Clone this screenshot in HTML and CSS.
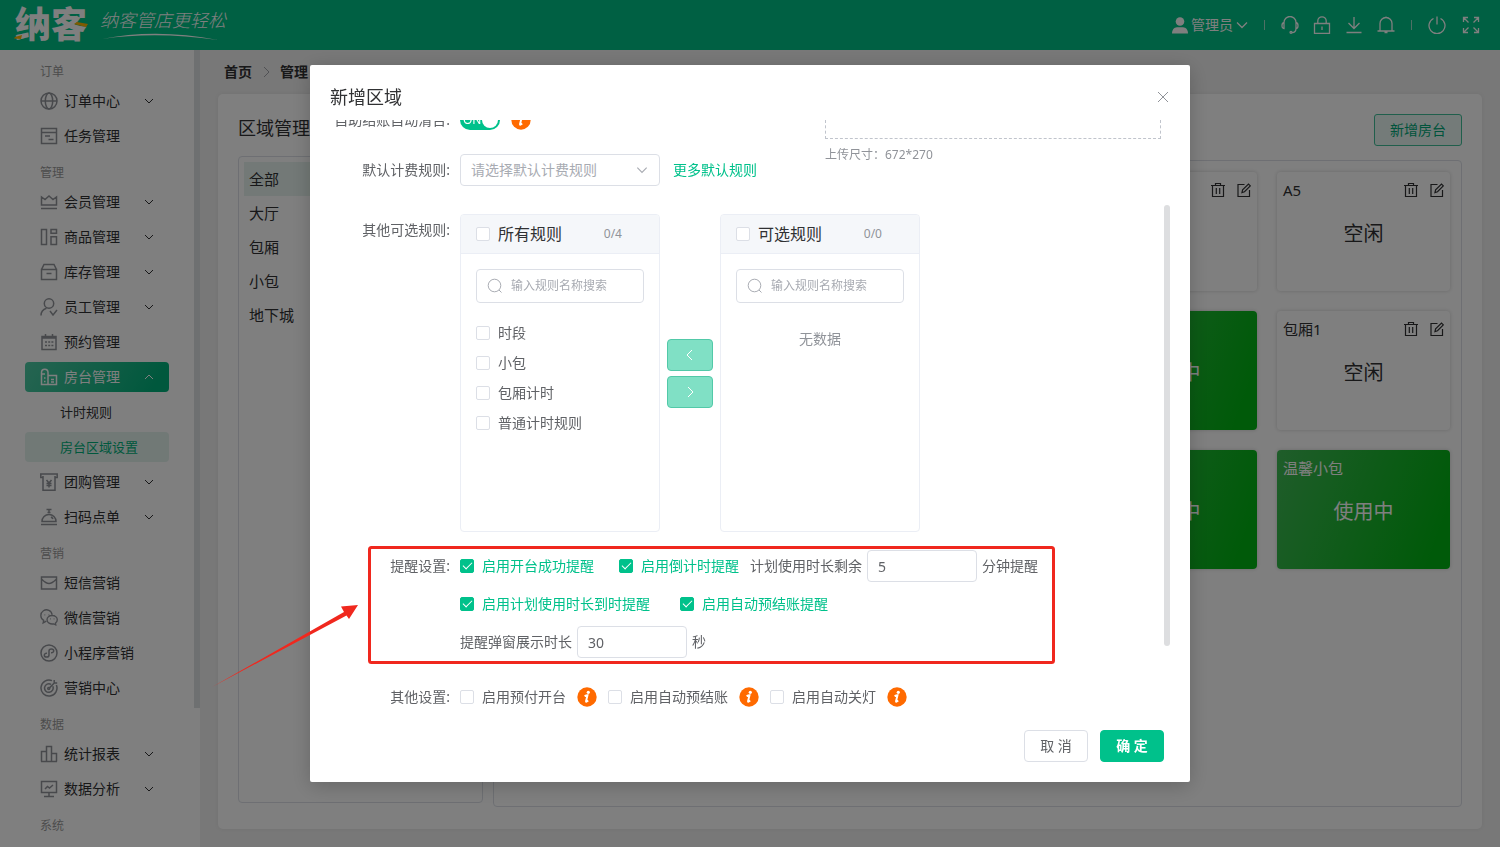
FILE: index.html
```html
<!DOCTYPE html>
<html lang="zh-CN">
<head>
<meta charset="utf-8">
<title>房台区域设置</title>
<link rel="stylesheet" href="styles.css">
</head>
<body>
<svg class="sprite" aria-hidden="true">
  <symbol id="i-down" viewBox="0 0 12 12"><path d="M2 4l4 4 4-4"/></symbol>
  <symbol id="i-up" viewBox="0 0 12 12"><path d="M2 8l4-4 4 4"/></symbol>
  <symbol id="i-right" viewBox="0 0 12 12"><path d="M4 1l5 5-5 5"/></symbol>
  <symbol id="i-left" viewBox="0 0 12 12"><path d="M8 1L3 6l5 5"/></symbol>
  <symbol id="i-search" viewBox="0 0 16 16"><circle cx="7.5" cy="7.5" r="6.3"/><path d="M12 12l2.5 2.5"/></symbol>
  <symbol id="i-info" viewBox="0 0 20 20"><circle cx="10" cy="10" r="9.7" fill="#ff6a00" stroke="none"/><circle cx="11.3" cy="5.3" r="1.6" fill="#fff" stroke="none"/><path d="M7.6 9.3c1-.7 2.2-1.1 2.9-1.1L9 14.2c-.1.9.9.5 2.2-.6" stroke="#fff" stroke-width="1.9"/></symbol>
  <symbol id="i-trash" viewBox="0 0 14 14"><path d="M0 2.5h14M1.5 2.5v11h11v-11M4.5 2.500v-2h5v2M5.300 5v6M8.700 5v6"/></symbol>
  <symbol id="i-edit" viewBox="0 0 14 14"><path d="M7.500 1.500H1v12h11.500V7M5 9.500l.6-2.600L11.500 1l1.800 1.800-5.800 5.900z"/></symbol>
  <symbol id="i-globe" viewBox="0 0 18 18"><circle cx="9" cy="9" r="8"/><ellipse cx="9" cy="9" rx="3.700" ry="8"/><path d="M1 9h16"/></symbol>
  <symbol id="i-task" viewBox="0 0 18 18"><path d="M1.500 1.500h15v15h-15zM1.500 5.500h15M5 9h5M8.500 12.500h5"/></symbol>
  <symbol id="i-crown" viewBox="0 0 18 18"><path d="M1.500 4v8h15V4l-3.500 2.500L9 3 5 6.500zM1 15.500h16"/></symbol>
  <symbol id="i-goods" viewBox="0 0 18 18"><path d="M1.500 1.500h5v15h-5zM11 1.500h5.500v3.800H11zM11 8.800h5.500v7.700H11z"/></symbol>
  <symbol id="i-stock" viewBox="0 0 18 18"><path d="M1.500 6.500h15v10h-15zM1.500 6.500L4 1.500h10l2.500 5M6.500 10.500h5"/></symbol>
  <symbol id="i-staff" viewBox="0 0 18 18"><circle cx="9" cy="5.500" r="4.700"/><path d="M1 17.500c0-4 2.500-6.300 5.500-7.300M10 13l3 4 4-5"/></symbol>
  <symbol id="i-cal" viewBox="0 0 18 18"><path d="M2 3.500h14v13H2zM2 5h14M5.500 1v3M12.500 1v3"/><path d="M5 9h2M8.200 9h2M11.400 9h2M5 12.500h2M8.200 12.500h2M11.400 12.500h2"/></symbol>
  <symbol id="i-room" viewBox="0 0 18 18"><path d="M1.500 16.500V4.500a3 3 0 0 1 6.500 0v12zM8 7.500h8.500v9H8M1.500 6H5M4 10h1.500M4 13.500h1.500M11 11.500h3M11 14h3"/></symbol>
  <symbol id="i-coupon" viewBox="0 0 18 18"><path d="M3 4.500H.8V1h16.400v3.500H15M3 3v14.300h12V3M6.500 7L9 10l2.500-3M9 10v4.500M6.500 10.500h5M6.500 12.500h5"/></symbol>
  <symbol id="i-bell-dish" viewBox="0 0 18 18"><path d="M2 13.500a7 7 0 0 1 14 0zM1 16.500h16M6.500 1.500h5M7.500 4.500h3M9 2v3M11 9c1 .5 1.600 1.200 2 2"/></symbol>
  <symbol id="i-mail" viewBox="0 0 18 18"><path d="M1.500 3h15v12h-15zM2 5.500c3 3 5 4 7 4s4-1 7-4"/></symbol>
  <symbol id="i-wechat" viewBox="0 0 20 18"><path d="M7 12.500l-3.500 2 .6-2.800A6.300 6.300 0 1 1 13.500 5.500M13.500 6.200c3.200 0 5.700 2 5.700 4.700 0 1.500-.8 2.800-2 3.700l.3 2-2.200-1.100c-4 .9-7.500-1.400-7.500-4.600 0-2.700 2.500-4.700 5.700-4.700zM5 5.500h.8M9.500 5.500h.8M11.300 10h.8M15.200 10h.8"/></symbol>
  <symbol id="i-mini" viewBox="0 0 18 18"><circle cx="9" cy="9" r="8"/><path d="M7 9.300c-1.700-.2-2.700.7-2.700 1.900 0 1.100 1 1.900 2.300 1.900C8 13.100 9 12.200 9 11V7c0-1.200 1-2.100 2.400-2.100 1.300 0 2.300.8 2.300 1.900 0 1.200-1 2.100-2.700 1.900"/></symbol>
  <symbol id="i-target" viewBox="0 0 18 18"><path d="M12 1.600A8 8 0 1 0 16.400 6M11 5.300A4.300 4.300 0 1 0 12.800 7.300M9 9.400l5.500-5.600M14.200 1v3h3"/><circle cx="8.700" cy="9.500" r="1"/></symbol>
  <symbol id="i-bars" viewBox="0 0 18 18"><path d="M1 16.500h16M1.500 16.500V6.500h5M6.500 16.500v-15h5v15M11.500 8.500h5v8"/></symbol>
  <symbol id="i-screen" viewBox="0 0 18 18"><path d="M1.500 1.500h15v11h-15zM9 12.500v4M4 16.500h10M5 9l2.500-2.500 2 1.500L13 5"/></symbol>
</svg>

<div class="app">
  <header class="topbar">
    <svg class="logo" viewBox="0 0 216 50" role="img" aria-label="纳客">
      <text class="logo-name" x="1" y="38">纳客</text>
      <path d="M60 24l12 3 2-3-11-2zM1 37l7-2-1 4-7-.5z" fill="#ffb400"/>
      <text class="logo-slogan" x="86" y="27">纳客管店更轻松</text>
      <path d="M88 39Q142 28 204 40Q142 31 88 39z" fill="#fff"/>
    </svg>
    <nav class="tools">
      <button class="user" type="button">
        <svg class="ico-fill" width="16" height="17" viewBox="0 0 16 17"><circle cx="8" cy="4.500" r="4.300"/><path d="M0 16.500c0-4 2-6 5-6.300h6c3 .3 5 2.300 5 6.300z"/></svg>
        <span>管理员</span>
        <svg class="ico" width="12" height="12" viewBox="0 0 12 12"><path d="M1 3.500l5 5 5-5"/></svg>
      </button>
      <i class="sep"></i>
      <button type="button" aria-label="客服"><svg class="ico" width="18" height="18" viewBox="0 0 18 18"><path d="M3 6.500a6 6 0 0 1 12 0M3 6.500v6C.3 12.500.3 7 3 6.500zM15 6.500v6c2.700 0 2.700-5.500 0-6zM15 12.500c0 2.500-1.500 4-4 4.200"/><circle cx="10" cy="16.300" r="1"/></svg></button>
      <button type="button" aria-label="锁屏"><svg class="ico" width="18" height="18" viewBox="0 0 18 18"><path d="M1.500 7.500h15v10h-15zM4.800 7.500V5a4.200 4.200 0 0 1 8.400 0v2.500M9 10.500v3.500"/></svg></button>
      <button type="button" aria-label="下载"><svg class="ico" width="18" height="18" viewBox="0 0 18 18"><path d="M9 1v11M3.500 7L9 12.500 14.500 7M1.500 16.500h15"/></svg></button>
      <button type="button" aria-label="通知"><svg class="ico" width="18" height="18" viewBox="0 0 18 18"><path d="M.5 15h17M3 15V7.500a6 6 0 0 1 12 0V15M9 .5v1M7.500 16.500h3"/></svg></button>
      <i class="sep"></i>
      <button type="button" aria-label="退出"><svg class="ico" width="18" height="18" viewBox="0 0 18 18"><path d="M5.500 2.500a8 8 0 1 0 7 0M9 .5v8"/></svg></button>
      <button type="button" aria-label="全屏"><svg class="ico" width="18" height="18" viewBox="0 0 18 18"><path d="M1.500 6V1.500H6M1.500 1.500l5 5M12 1.500h4.500V6M16.500 1.500l-5 5M1.500 12v4.500H6M1.500 16.500l5-5M16.500 12v4.500H12M16.500 16.500l-5-5"/></svg></button>
    </nav>
  </header>

  <div class="body">
    <aside class="sidebar">
      <nav class="menu">
        <h4>订单</h4>
        <a href="#"><svg><use href="#i-globe"/></svg><span>订单中心</span><svg class="arr"><use href="#i-down"/></svg></a>
        <a href="#"><svg><use href="#i-task"/></svg><span>任务管理</span></a>
        <h4>管理</h4>
        <a href="#"><svg><use href="#i-crown"/></svg><span>会员管理</span><svg class="arr"><use href="#i-down"/></svg></a>
        <a href="#"><svg><use href="#i-goods"/></svg><span>商品管理</span><svg class="arr"><use href="#i-down"/></svg></a>
        <a href="#"><svg><use href="#i-stock"/></svg><span>库存管理</span><svg class="arr"><use href="#i-down"/></svg></a>
        <a href="#"><svg><use href="#i-staff"/></svg><span>员工管理</span><svg class="arr"><use href="#i-down"/></svg></a>
        <a href="#"><svg><use href="#i-cal"/></svg><span>预约管理</span></a>
        <a href="#" class="open"><svg><use href="#i-room"/></svg><span>房台管理</span><svg class="arr"><use href="#i-up"/></svg></a>
        <a href="#" class="sub">计时规则</a>
        <a href="#" class="sub current">房台区域设置</a>
        <a href="#"><svg><use href="#i-coupon"/></svg><span>团购管理</span><svg class="arr"><use href="#i-down"/></svg></a>
        <a href="#"><svg><use href="#i-bell-dish"/></svg><span>扫码点单</span><svg class="arr"><use href="#i-down"/></svg></a>
        <h4>营销</h4>
        <a href="#"><svg><use href="#i-mail"/></svg><span>短信营销</span></a>
        <a href="#"><svg><use href="#i-wechat"/></svg><span>微信营销</span></a>
        <a href="#"><svg><use href="#i-mini"/></svg><span>小程序营销</span></a>
        <a href="#"><svg><use href="#i-target"/></svg><span>营销中心</span></a>
        <h4>数据</h4>
        <a href="#"><svg><use href="#i-bars"/></svg><span>统计报表</span><svg class="arr"><use href="#i-down"/></svg></a>
        <a href="#"><svg><use href="#i-screen"/></svg><span>数据分析</span><svg class="arr"><use href="#i-down"/></svg></a>
        <h4>系统</h4>
      </nav>
      <i class="side-thumb"></i>
    </aside>

    <main class="main">
      <nav class="crumbs"><a href="#">首页</a><svg width="12" height="12"><use href="#i-right"/></svg><a href="#">管理</a></nav>
      <section class="panel">
        <div class="panel-head"><h2>区域管理</h2><button class="btn-soft" type="button">新增房台</button></div>
        <div class="panel-body">
          <ul class="areas">
            <li class="on">全部</li><li>大厅</li><li>包厢</li><li>小包</li><li>地下城</li>
          </ul>
          <div class="rooms">
            <article class="room col4"><header><span></span><svg><use href="#i-trash"/></svg><svg><use href="#i-edit"/></svg></header></article>
            <article class="room"><header><span>A5</span><svg><use href="#i-trash"/></svg><svg><use href="#i-edit"/></svg></header><p>空闲</p></article>
            <article class="room busy col4"><header></header><p>使用中</p></article>
            <article class="room"><header><span>包厢1</span><svg><use href="#i-trash"/></svg><svg><use href="#i-edit"/></svg></header><p>空闲</p></article>
            <article class="room busy col4"><header></header><p>使用中</p></article>
            <article class="room busy"><header><span>温馨小包</span></header><p>使用中</p></article>
          </div>
        </div>
      </section>
    </main>
  </div>
</div>

<div class="mask">
  <div class="dialog" role="dialog" aria-labelledby="dlg-title">
    <div class="dlg-head">
      <h3 id="dlg-title">新增区域</h3>
      <button class="close" type="button" aria-label="关闭"><svg width="12" height="12" viewBox="0 0 12 12"><path d="M1 1l10 10M11 1L1 11"/></svg></button>
    </div>
    <form class="dlg-body">
      <div class="form">
        <div class="top">
          <div class="top-left">
            <div class="row">
              <label class="lab" for="auto">自助结账自动清台:</label>
              <div class="line"><span class="switch"><input id="auto" type="checkbox" checked><span>ON</span></span><svg class="info gap-s"><use href="#i-info"/></svg></div>
            </div>
            <div class="row">
              <label class="lab" for="rule">默认计费规则:</label>
              <div class="line"><span class="select"><select id="rule"><option>请选择默认计费规则</option></select><svg width="14" height="14"><use href="#i-down"/></svg></span><a class="more" href="#">更多默认规则</a></div>
            </div>
          </div>
          <div class="upload"><div class="drop"></div><p>上传尺寸：672*270</p></div>
        </div>

        <div class="row rules">
          <span class="lab">其他可选规则:</span>
          <div class="transfer">
            <div class="box">
              <div class="box-head"><label class="ck"><input type="checkbox"><span>所有规则</span></label><small>0/4</small></div>
              <div class="find"><svg width="16" height="16"><use href="#i-search"/></svg><input type="text" placeholder="输入规则名称搜索" aria-label="搜索所有规则"></div>
              <div class="opts">
                <label class="ck"><input type="checkbox"><span>时段</span></label>
                <label class="ck"><input type="checkbox"><span>小包</span></label>
                <label class="ck"><input type="checkbox"><span>包厢计时</span></label>
                <label class="ck"><input type="checkbox"><span>普通计时规则</span></label>
              </div>
            </div>
            <div class="moves">
              <button type="button" aria-label="移回"><svg width="12" height="12"><use href="#i-left"/></svg></button>
              <button type="button" aria-label="移入"><svg width="12" height="12"><use href="#i-right"/></svg></button>
            </div>
            <div class="box">
              <div class="box-head"><label class="ck"><input type="checkbox"><span>可选规则</span></label><small>0/0</small></div>
              <div class="find"><svg width="16" height="16"><use href="#i-search"/></svg><input type="text" placeholder="输入规则名称搜索" aria-label="搜索可选规则"></div>
              <p class="none">无数据</p>
            </div>
          </div>
        </div>

        <div class="row remind">
          <span class="lab">提醒设置:</span>
          <div class="lines">
            <div class="line">
              <label class="ck wide"><input type="checkbox" checked><span>启用开台成功提醒</span></label>
              <label class="ck"><input type="checkbox" checked><span>启用倒计时提醒</span></label>
              <label class="gap-s" for="left-min">计划使用时长剩余</label><input class="num" id="left-min" type="text" value="5"><span>分钟提醒</span>
            </div>
            <div class="line">
              <label class="ck wider"><input type="checkbox" checked><span>启用计划使用时长到时提醒</span></label>
              <label class="ck"><input type="checkbox" checked><span>启用自动预结账提醒</span></label>
            </div>
            <div class="line"><label for="pop-sec">提醒弹窗展示时长</label><input class="num" id="pop-sec" type="text" value="30"><span>秒</span></div>
          </div>
        </div>

        <div class="row">
          <span class="lab">其他设置:</span>
          <div class="line">
            <label class="ck"><input type="checkbox"><span>启用预付开台</span></label><svg class="info gap-s"><use href="#i-info"/></svg>
            <label class="ck gap-s"><input type="checkbox"><span>启用自动预结账</span></label><svg class="info gap-s"><use href="#i-info"/></svg>
            <label class="ck gap-s"><input type="checkbox"><span>启用自动关灯</span></label><svg class="info gap-s"><use href="#i-info"/></svg>
          </div>
        </div>
      </div>
    </form>
    <div class="dlg-foot"><button class="btn" type="button">取 消</button><button class="btn primary" type="button">确 定</button></div>
    <i class="dlg-thumb"></i>
    <svg class="note" width="844" height="145" viewBox="0 0 844 145" aria-hidden="true">
      <rect x="157.500" y="3.500" width="684" height="115" rx="2"/>
      <path d="M0 143L132 68l-3-5.500L146 61l-9 14-2.500-3.500z"/>
    </svg>
  </div>
</div>
</body>
</html>
```

FILE: styles.css
```css
* { box-sizing: border-box; }
body {
  margin: 0;
  font: 14px/20px "Noto Sans", "Noto Sans CJK SC", sans-serif;
  color: #606266;
  background: #f0f0f0;
}
h2, h3, h4, p, ul { margin: 0; padding: 0; font-weight: 400; }
ul { list-style: none; }
a { color: inherit; text-decoration: none; }
button, input, select { font: inherit; color: inherit; margin: 0; }
button { padding: 0; border: 0; background: none; cursor: pointer; }
svg { fill: none; stroke: currentColor; flex: none; }
.sprite { position: absolute; width: 0; height: 0; }

.app { display: flex; flex-direction: column; height: 100vh; }

/* top bar */
.topbar {
  display: flex;
  justify-content: space-between;
  align-items: center;
  height: 50px;
  padding: 0 20px 0 14px;
  flex: none;
  color: #fff;
  background: #00c086;
}
.logo { width: 216px; height: 50px; stroke: none; fill: #fff; }
.logo-name { font-size: 36px; font-weight: 900; }
.logo-slogan { font-size: 18px; font-weight: 300; font-style: italic; }
.tools { display: flex; align-items: center; gap: 14px; }
.tools button { display: flex; align-items: center; }
.tools .user { gap: 3px; }
.tools button:last-child { margin-left: 2px; }
.ico { stroke-width: 1.3; }
.ico-fill { fill: currentColor; stroke: none; }
.sep { width: 1px; height: 10px; margin: 0 2px; background: #9fe0cb; }

/* sidebar */
.body { display: flex; flex: 1; min-height: 0; }
.sidebar { position: relative; width: 200px; flex: none; overflow: hidden; background: #fff; }
.menu { padding: 5px 31px 0 25px; }
.menu h4 { height: 31px; padding-left: 15px; font-size: 12px; line-height: 34px; color: #999; }
.menu a {
  display: flex;
  align-items: center;
  gap: 6px;
  height: 30px;
  margin-bottom: 5px;
  padding: 0 14px 0 15px;
  border-radius: 4px;
  color: #303133;
}
.menu svg { width: 18px; height: 18px; color: #909399; stroke-width: 1.5; }
.menu .arr { width: 12px; height: 12px; margin-left: auto; color: #303133; stroke-width: 1; }
.menu .open { color: #fff; background: linear-gradient(120deg, #4dc9a3, #00b07a 90%); }
.menu .open svg { color: #fff; }
.menu .sub { padding-left: 35px; font-size: 13px; }
.menu .current { color: #00b07a; background: #e3f2ed; }
.side-thumb { position: absolute; top: 0; right: 0; width: 6px; height: 658px; background: #dde0e2; }

/* page */
.main { display: flex; flex-direction: column; flex: 1; min-width: 0; padding: 0 18px 18px; }
.crumbs { display: flex; align-items: center; gap: 8px; height: 44px; padding-left: 6px; font-weight: 700; color: #303133; }
.crumbs svg { color: #a0a3a8; }
.panel { display: flex; flex-direction: column; flex: 1; min-height: 0; padding: 20px; border-radius: 5px; background: #fff; box-shadow: 0 0 4px rgba(0, 0, 0, .06); }
.panel-head { display: flex; justify-content: space-between; }
.panel-head h2 { font-size: 18px; line-height: 28px; color: #303133; }
.btn-soft { height: 32px; padding: 0 15px; border: 1px solid #40bf99; border-radius: 3px; color: #00a878; background: #e9f6f2; }
.panel-body { display: flex; gap: 10px; flex: 1; padding-top: 10px; }
.areas { width: 245px; margin-bottom: 6px; padding: 5px; border: 1px solid #dcdfe6; border-radius: 4px; font-size: 15px; color: #303133; }
.areas li { height: 34px; padding-left: 5px; line-height: 34px; }
.areas .on { background: #e6f3ee; }
.rooms {
  display: grid;
  grid-template-columns: repeat(5, 1fr);
  grid-auto-rows: 119px;
  gap: 20px;
  flex: 1;
  margin: 4px 0 2px;
  padding: 11px;
  border: 1px solid #dcdfe6;
  border-radius: 4px;
}
.room { padding: 0 6px; border-radius: 4px; color: #303133; box-shadow: 0 0 4px rgba(0, 0, 0, .18); }
.room.col4 { grid-column: 4; }
.room header { display: flex; align-items: center; gap: 12px; height: 36px; font-size: 15px; }
.room header span { flex: 1; }
.room header svg { width: 14px; height: 14px; stroke-width: 1.2; }
.room p { margin-top: 12px; font-size: 20px; line-height: 28px; text-align: center; }
.busy { color: #fff; background: linear-gradient(110deg, #3fba55, #00b412 90%); }

/* dialog */
.mask { position: fixed; inset: 0; padding: 65px 20px 0; background: rgba(0, 0, 0, .5); }
.dialog { position: relative; max-width: 880px; margin: 0 auto; border-radius: 2px; background: #fff; box-shadow: 0 4px 20px rgba(0, 0, 0, .2); }
.dlg-head { display: flex; justify-content: space-between; align-items: center; height: 55px; padding: 9px 21px 0 20px; }
.dlg-head h3 { font-size: 18px; line-height: 24px; color: #303133; }
.close { display: flex; padding: 0; color: #909399; }
.dlg-body { padding: 0 29px 0 20px; overflow: hidden; }
.form { margin-top: -16px; padding-bottom: 4px; }
.top { display: flex; justify-content: space-between; }
.row { display: grid; grid-template-columns: 120px 1fr; gap: 10px; margin-bottom: 18px; }
.top .row:last-child { margin-bottom: 0; }
.lab { line-height: 32px; text-align: right; white-space: nowrap; }
.line { display: flex; align-items: center; gap: 5px; height: 32px; white-space: nowrap; }
.gap-s { margin-left: 6px; }
.info { width: 20px; height: 20px; }

.switch { position: relative; display: flex; }
.switch input { appearance: none; width: 40px; height: 20px; border-radius: 10px; background: #00c18b; }
.switch input::after { content: ""; display: block; width: 16px; height: 16px; margin: 2px 2px 2px 22px; border-radius: 8px; background: #fff; }
.switch span { position: absolute; left: 3px; font-size: 12px; color: #fff; pointer-events: none; }

.select { position: relative; display: flex; width: 200px; }
.select select { appearance: none; width: 100%; height: 32px; padding: 0 30px 0 10px; border: 1px solid #dcdfe6; border-radius: 4px; color: #a8abb2; background: #fff; }
.select svg { position: absolute; top: 9px; right: 11px; color: #a8abb2; }
.more { margin-left: 8px; color: #00c18b; }

.upload { width: 336px; color: #909399; }
.drop { height: 35px; border: 1px dashed #c0c4cc; }
.upload p { margin-top: 7px; font-size: 12px; line-height: 18px; }

.rules { margin-top: 28px; }
.transfer { display: flex; height: 318px; }
.box { width: 200px; border: 1px solid #ebeef5; border-radius: 4px; overflow: hidden; }
.box-head { display: flex; align-items: center; justify-content: space-between; height: 39px; padding: 0 37px 0 15px; border-bottom: 1px solid #ebeef5; background: #f5f7fa; }
.box-head .ck span { font-size: 16px; color: #303133; }
.box-head small { font-size: 12px; color: #909399; }
.find { display: flex; align-items: center; gap: 8px; height: 34px; margin: 15px; padding: 0 10px; border: 1px solid #dcdfe6; border-radius: 4px; color: #a8abb2; }
.find input { width: 100%; min-width: 0; padding: 0; border: 0; outline: 0; font-size: 12px; }
.find input::placeholder { color: #a8abb2; }
.opts { padding: 0 15px; }
.opts .ck { height: 30px; }
.none { line-height: 42px; text-align: center; color: #909399; }
.moves { display: flex; flex-direction: column; align-items: center; justify-content: center; gap: 5px; width: 60px; }
.moves button { display: flex; align-items: center; justify-content: center; width: 46px; height: 32px; border: 1px solid #52c9a8; border-radius: 4px; color: #fff; background: #80e0c5; }

.ck { display: flex; align-items: center; gap: 8px; }
.ck input { appearance: none; width: 14px; height: 14px; flex: none; border: 1px solid #dcdfe6; border-radius: 2px; background: #fff; }
.ck input:checked { border-color: #00c18b; background: #00c18b; }
.ck input:checked::after { content: ""; display: block; width: 4px; height: 8px; margin: 0 4px; border: solid #fff; border-width: 0 1px 1px 0; transform: rotate(45deg); }
.ck input:checked + span { color: #00c18b; }
.wide { margin-right: 20px; }
.wider { margin-right: 25px; }
.lines { display: grid; gap: 6px; }
.remind { margin-bottom: 23px; }
.num { width: 110px; height: 32px; padding: 0 10px; border: 1px solid #dcdfe6; border-radius: 4px; background: #fff; }

.form > .row:last-child { margin-bottom: 0; }
.dlg-foot { display: flex; justify-content: flex-end; gap: 12px; padding: 13px 26px 20px; }
.btn { min-width: 64px; height: 32px; padding: 0 15px; border: 1px solid #dcdfe6; border-radius: 4px; background: #fff; }
.primary { border-color: #00c18b; font-weight: 700; color: #fff; background: #00c18b; }
.dlg-thumb { position: absolute; top: 140px; right: 20px; width: 6px; height: 441px; border-radius: 3px; background: #dddee0; }

/* callout frame and arrow drawn over the dialog */
.note { position: absolute; top: 479px; left: -98px; pointer-events: none; }
.note rect { stroke: #f0281e; stroke-width: 3; }
.note path { fill: #f0281e; stroke: none; }
```
